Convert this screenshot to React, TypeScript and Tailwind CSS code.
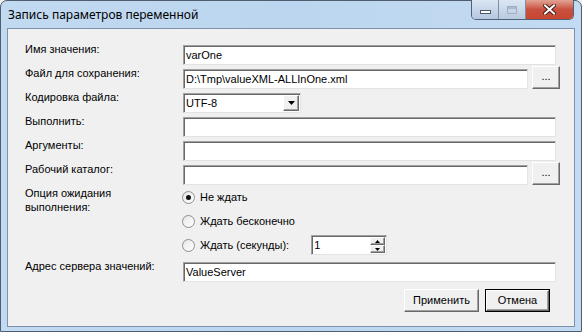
import React from "react";

const font = { fontFamily: '"Liberation Sans", Arial, sans-serif' };

function TextBox({ value, className = "" }: { value?: string; className?: string }) {
  return (
    <div
      className={`h-[20px] bg-white border border-t-[#a0a0a0] border-l-[#a0a0a0] border-b-[#e3e3e3] border-r-[#e3e3e3] shadow-[inset_1px_1px_0_#696969] pl-[2px] pt-[1px] text-[11px] leading-[16px] text-black ${className}`}
    >
      {value}
    </div>
  );
}

function RaisedButton({ children, className = "" }: { children: React.ReactNode; className?: string }) {
  return (
    <div
      className={`flex items-center justify-center bg-[#f0f0f0] border border-t-white border-l-white border-b-[#696969] border-r-[#696969] shadow-[inset_-1px_-1px_0_#a0a0a0] text-[11px] text-black ${className}`}
    >
      {children}
    </div>
  );
}

function Radio({ checked, label }: { checked?: boolean; label: string }) {
  return (
    <div className="flex items-center gap-[5px] h-[24px]">
      <div className="w-[13px] h-[13px] rounded-full border border-[#8f8f8f] bg-gradient-to-br from-[#e6e6e6] to-white flex items-center justify-center">
        {checked && <div className="w-[5px] h-[5px] rounded-full bg-[#111]" />}
      </div>
      <span className="text-[11px] text-black">{label}</span>
    </div>
  );
}

function Row({ label, children }: { label: string; children: React.ReactNode }) {
  return (
    <div className="flex h-[24px]">
      <div className="w-[158px] text-[11px] leading-[13px] text-black">{label}</div>
      <div className="flex-1 flex items-start pt-[2px]">{children}</div>
    </div>
  );
}

export default function App() {
  return (
    <div className="w-[582px] h-[332px] bg-[#f0f0f0]" style={font}>
      <div className="w-[582px] h-[332px] rounded-t-[7px] border border-[#4f5d70] bg-gradient-to-r from-[#c1d9f1] via-[#bcd6ef] to-[#c3dbf2] flex flex-col px-[6px] pb-[4px]">
        {/* title bar */}
        <div className="h-[27px] flex items-start shrink-0">
          <div
            className="pt-[6px] pl-[1px] text-[12px] leading-[15px] text-black flex-1"
            style={{ fontFamily: '"Noto Sans", "Liberation Sans", sans-serif' }}
          >
            Запись параметров переменной
          </div>
          <div className="flex h-[20px] -mt-px mr-[1px] rounded-b-[5px] border border-t-0 border-[#50627a] overflow-hidden">
            <div className="w-[27px] h-full bg-gradient-to-b from-[#dbe6f3] to-[#b4c7de] border-r border-[#7b8fa8] flex items-end justify-center pb-[5px]">
              <div className="w-[11px] h-[4px] bg-white border border-[#4b5868]" />
            </div>
            <div className="w-[27px] h-full bg-gradient-to-b from-[#dbe6f3] to-[#b9cbe0] border-r border-[#7b8fa8] flex items-center justify-center">
              <div className="w-[10px] h-[8px] border border-[#9fb0c4] shadow-[inset_0_2px_0_#a9b9cc]" />
            </div>
            <div className="w-[47px] h-full bg-gradient-to-b from-[#e2a394] via-[#c9503e] to-[#c8452f] flex items-center justify-center">
              <svg width="13" height="11" viewBox="0 0 13 11">
                <path d="M2 1.5 L11 9.5 M11 1.5 L2 9.5" stroke="#4a1f18" strokeWidth="4" strokeLinecap="square" />
                <path d="M2 1.5 L11 9.5 M11 1.5 L2 9.5" stroke="#ffffff" strokeWidth="2" strokeLinecap="square" />
              </svg>
            </div>
          </div>
        </div>

        {/* client area */}
        <div className="flex-1 border border-[#7d91ab] bg-[#f0f0f0] pl-[17px] pr-[14px] pt-[14px] flex flex-col">
          <Row label="Имя значения:">
            <TextBox value="varOne" className="flex-1 mr-[4px]" />
          </Row>
          <Row label="Файл для сохранения:">
            <TextBox value="D:\Tmp\valueXML-ALLInOne.xml" className="flex-1" />
            <RaisedButton className="w-[28px] h-[23px] ml-[4px] -mt-[3px] pb-[2px]">...</RaisedButton>
          </Row>
          <Row label="Кодировка файла:">
            <div className="w-[118px] h-[20px] bg-white border border-t-[#a0a0a0] border-l-[#a0a0a0] border-b-[#e3e3e3] border-r-[#e3e3e3] shadow-[inset_1px_1px_0_#696969] flex items-start">
              <div className="flex-1 pl-[2px] pt-[1px] text-[11px] leading-[16px] text-black">UTF-8</div>
              <RaisedButton className="w-[16px] h-[16px] mt-[1px] mr-[1px]">
                <svg width="7" height="4" viewBox="0 0 7 4">
                  <path d="M0 0 H7 L3.5 4 Z" fill="#000" />
                </svg>
              </RaisedButton>
            </div>
          </Row>
          <Row label="Выполнить:">
            <TextBox className="flex-1 mr-[4px]" />
          </Row>
          <Row label="Аргументы:">
            <TextBox className="flex-1 mr-[4px]" />
          </Row>
          <Row label="Рабочий каталог:">
            <TextBox className="flex-1" />
            <RaisedButton className="w-[28px] h-[23px] ml-[4px] -mt-[3px] pb-[2px]">...</RaisedButton>
          </Row>

          {/* wait options */}
          <div className="flex mt-[-2px]">
            <div className="w-[158px] pt-[1px] text-[11px] leading-[14px] text-black">
              Опция ожидания
              <br />
              выполнения:
            </div>
            <div className="flex flex-col -ml-[1px]">
              <Radio checked label="Не ждать" />
              <Radio label="Ждать бесконечно" />
              <div className="flex items-center">
                <Radio label="Ждать (секунды):" />
                <div className="ml-[22px] w-[76px] h-[20px] bg-white border border-t-[#a0a0a0] border-l-[#a0a0a0] border-b-[#e3e3e3] border-r-[#e3e3e3] shadow-[inset_1px_1px_0_#696969] flex">
                  <div className="flex-1 pl-[2px] pt-[1px] text-[11px] leading-[16px] text-black">1</div>
                  <div className="w-[15px] flex flex-col mt-[1px] mr-[1px] mb-[1px]">
                    <RaisedButton className="flex-1">
                      <svg width="5" height="3" viewBox="0 0 5 3">
                        <path d="M0 3 H5 L2.5 0 Z" fill="#000" />
                      </svg>
                    </RaisedButton>
                    <RaisedButton className="flex-1">
                      <svg width="5" height="3" viewBox="0 0 5 3">
                        <path d="M0 0 H5 L2.5 3 Z" fill="#000" />
                      </svg>
                    </RaisedButton>
                  </div>
                </div>
              </div>
            </div>
          </div>

          <div className="mt-[3px]">
            <Row label="Адрес сервера значений:">
              <TextBox value="ValueServer" className="flex-1 mr-[4px]" />
            </Row>
          </div>

          {/* buttons */}
          <div className="flex justify-end gap-[6px] mt-[5px] pr-[10px]">
            <RaisedButton className="w-[75px] h-[23px]">Применить</RaisedButton>
            <div className="w-[65px] h-[23px] border border-black">
              <RaisedButton className="w-full h-full">Отмена</RaisedButton>
            </div>
          </div>
        </div>
      </div>
    </div>
  );
}
